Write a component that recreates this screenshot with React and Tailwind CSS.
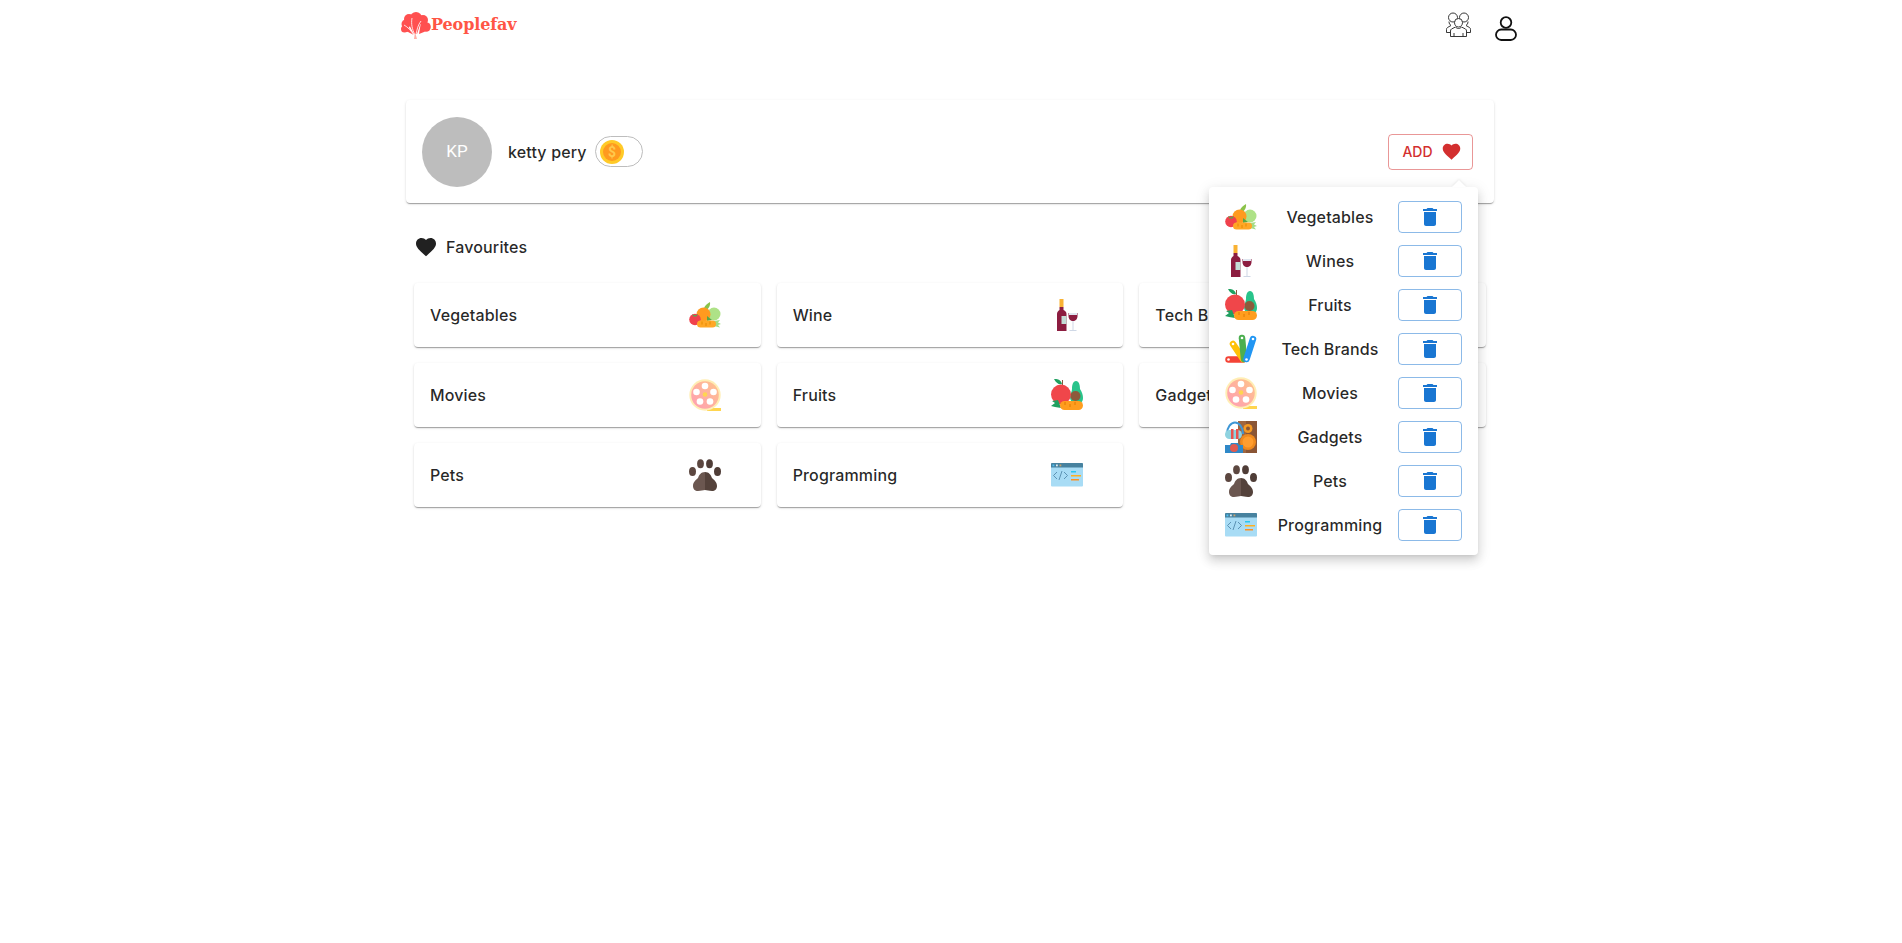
const FAVORITE = 'M12 21.35l-1.45-1.32C5.4 15.36 2 12.28 2 8.5 2 5.42 4.42 3 7.5 3c1.74 0 3.41.81 4.5 2.09C13.09 3.81 14.76 3 16.5 3 19.58 3 22 5.42 22 8.5c0 3.78-3.4 6.86-8.55 11.54L12 21.35z';
const DELETE = 'M6 19c0 1.1.9 2 2 2h8c1.1 0 2-.9 2-2V7H6v12zM19 4h-3.5l-1-1h-5l-1 1H5v2h14V4z';

function Heart({ className }) {
  return (
    <svg viewBox="0 0 24 24" className={className} fill="currentColor">
      <path d={FAVORITE} />
    </svg>
  );
}

function Vegetables() {
  return (
    <svg viewBox="0 0 32 32" className="w-8 h-8 shrink-0">
      <path d="M15 10C15 7 18 5 21 3 21.500 6 20 10 17 11z" fill="#8bc34a" />
      <circle cx="25" cy="15" r="6.500" fill="#aee287" />
      <circle cx="14.500" cy="15.500" r="7" fill="#ff9a1f" />
      <circle cx="6" cy="20.500" r="5.800" fill="#f0414c" />
      <path d="M3 15l3 1.500L9 15l-1.500 2.500h-3z" fill="#4caf50" />
      <path d="M25 22l6-1-2 2.500 3 1.500-3 1 2 2.500-6-1.500z" fill="#a5dc86" />
      <path d="M18 17l5 4-5 1z" fill="#5aa642" />
      <rect x="8" y="21.500" width="19" height="7" rx="3.500" fill="#ffa726" />
      <path d="M13 22.500v3M17 24v3M21 22.500v3" stroke="#e68a00" strokeWidth="1" />
    </svg>
  );
}

function Wine() {
  return (
    <svg viewBox="0 0 32 32" className="w-8 h-8 shrink-0">
      <rect x="8.500" y="0" width="4" height="8" fill="#f9b233" />
      <path d="M8.500 8h4v3c2 1 3 2 3 4v17H6V15c0-2 1-3 2.500-4z" fill="#8c1d40" />
      <rect x="10.500" y="17" width="5" height="8" fill="#c4dcd6" />
      <path d="M17.500 14h9v3c0 3-2 5-4.500 5s-4.500-2-4.500-5z" fill="#8c1d40" />
      <path d="M18 14h8v2h-8z" fill="#dfe6f0" />
      <path d="M21.500 22h1v9h3v1h-7v-1h3z" fill="#cfd8e6" />
    </svg>
  );
}

function Fruits() {
  return (
    <svg viewBox="0 0 32 32" className="w-8 h-8 shrink-0">
      <path d="M25 2c3 0 4 4 4 8 2 3 3 6 3 9 0 4-3 6-6 6-4 0-7-3-7-7 0-3 2-5 2-8 0-4 1-8 4-8z" fill="#29c48b" />
      <circle cx="24.500" cy="17" r="5" fill="#8d5a3c" />
      <path d="M4 0c3 0 6 1 7 5C8 6 5 4 3 0z" fill="#1fa060" />
      <path d="M11 1h1v5h-1z" fill="#8d5a3c" />
      <circle cx="10" cy="15.500" r="10" fill="#f0464a" />
      <path d="M0 27l4-3-3-2 6-1 3 8-6-1z" fill="#1fa060" />
      <rect x="9" y="22" width="23" height="9" rx="4.500" fill="#ff9d1e" />
      <path d="M14 23v3M19 25v3M24 23v3" stroke="#e07b00" strokeWidth="1" />
    </svg>
  );
}

function TechBrands() {
  return (
    <svg viewBox="0 0 32 32" className="w-8 h-8 shrink-0" strokeLinecap="round" strokeWidth="6.500">
      <path d="M3.500 26.500H18" stroke="#f44336" />
      <path d="M8 11l10 15" stroke="#ffc107" />
      <path d="M17 5l2 21" stroke="#4caf50" />
      <path d="M28 6l-6.500 20" stroke="#2196f3" />
      <g fill="#fff" stroke="none">
        <circle cx="3.500" cy="26.500" r="1.300" />
        <circle cx="8" cy="11" r="1.300" />
        <circle cx="17" cy="5" r="1.300" />
        <circle cx="28" cy="6" r="1.300" />
        <circle cx="21.500" cy="26.500" r="1.300" />
      </g>
    </svg>
  );
}

function Movies() {
  return (
    <svg viewBox="0 0 32 32" className="w-8 h-8 shrink-0">
      <defs>
        <linearGradient id="reel" x1="0" y1="1" x2="1" y2="0">
          <stop offset="0" stopColor="#ff9db5" />
          <stop offset="1" stopColor="#ffc48a" />
        </linearGradient>
      </defs>
      <rect x="18" y="29" width="14" height="3" fill="#ffd54f" />
      <circle cx="16" cy="16" r="15.700" fill="#ffeeb5" />
      <circle cx="16" cy="16" r="13.800" fill="url(#reel)" />
      <g fill="#fff">
        <circle cx="16" cy="7" r="3.300" />
        <circle cx="7.500" cy="13" r="3.300" />
        <circle cx="24.500" cy="13" r="3.300" />
        <circle cx="11" cy="22.500" r="3.300" />
        <circle cx="21" cy="22.500" r="3.300" />
      </g>
      <circle cx="16" cy="15.500" r="2.300" fill="#ffd54f" />
    </svg>
  );
}

function Gadgets() {
  return (
    <svg viewBox="0 0 32 32" className="w-8 h-8 shrink-0">
      <rect x="13" y="0" width="19" height="32" fill="#8a5535" />
      <rect x="13" y="0" width="8" height="32" fill="#a0663f" />
      <circle cx="23" cy="7.500" r="4.500" fill="#f59a23" />
      <circle cx="23" cy="7.500" r="2" fill="#8a5535" />
      <circle cx="23" cy="21" r="8" fill="#ef8a1d" />
      <circle cx="23" cy="21" r="5.500" fill="#ff9d2e" />
      <path d="M2 13C2 6 6 1.500 10 1.500S18 6 18 13" fill="none" stroke="#3f97d6" strokeWidth="2" />
      <rect x="0" y="9" width="17" height="9" rx="4.500" fill="#8fd3e0" />
      <rect x="6" y="8" width="2.500" height="10" fill="#e9534f" />
      <rect x="11" y="8" width="2.500" height="10" fill="#e9534f" />
      <path d="M6 22h7l1 2h4v8H0v-8h5z" fill="#2f88c8" />
      <circle cx="9" cy="27" r="4" fill="#e05a4f" />
    </svg>
  );
}

function Paw() {
  return (
    <svg viewBox="0 0 32 32" className="w-8 h-8 shrink-0">
      <ellipse cx="11.500" cy="4.700" rx="3.400" ry="4.500" fill="#5c4740" />
      <ellipse cx="20.500" cy="4.700" rx="3.400" ry="4.500" fill="#4f3d37" />
      <ellipse cx="3.500" cy="12.500" rx="3.500" ry="4.500" fill="#5c4740" />
      <ellipse cx="28.500" cy="12.500" rx="3.500" ry="4.500" fill="#4f3d37" />
      <path d="M16 13c-4 0-6 3-7 6-2 2-5 4-5 8 0 3 2 5 5 5 3 0 5-1 7-1z" fill="#6b5750" />
      <path d="M16 13c4 0 6 3 7 6 2 2 5 4 5 8 0 3-2 5-5 5-3 0-5-1-7-1z" fill="#54423b" />
    </svg>
  );
}

function Programming() {
  return (
    <svg viewBox="0 0 32 32" className="w-8 h-8 shrink-0">
      <rect x="0" y="4" width="32" height="23.500" rx="1" fill="#a8dcf5" />
      <path d="M0 5a1 1 0 011-1h30a1 1 0 011 1v3.500H0z" fill="#47829f" />
      <rect x="1.500" y="5.500" width="1.800" height="1.800" fill="#4fc3f7" />
      <rect x="5" y="5.500" width="1.800" height="1.800" fill="#e3edf2" />
      <rect x="8.500" y="5.500" width="1.800" height="1.800" fill="#c9a26b" />
      <path d="M6 13l-3.500 3.500L6 20M13 13l3.500 3.500L13 20M11 12l-3 9" fill="none" stroke="#5c93b4" strokeWidth="1" />
      <rect x="20" y="12" width="5" height="1.500" fill="#29c6f0" />
      <rect x="20" y="16" width="10" height="1.500" fill="#ffb020" />
      <rect x="20" y="20" width="8" height="1.500" fill="#ff9020" />
    </svg>
  );
}

const favourites = [
  { name: 'Vegetables', Icon: Vegetables },
  { name: 'Wine', Icon: Wine },
  { name: 'Tech Brands', Icon: TechBrands },
  { name: 'Movies', Icon: Movies },
  { name: 'Fruits', Icon: Fruits },
  { name: 'Gadgets', Icon: Gadgets },
  { name: 'Pets', Icon: Paw },
  { name: 'Programming', Icon: Programming },
];

const addList = [
  { name: 'Vegetables', Icon: Vegetables },
  { name: 'Wines', Icon: Wine },
  { name: 'Fruits', Icon: Fruits },
  { name: 'Tech Brands', Icon: TechBrands },
  { name: 'Movies', Icon: Movies },
  { name: 'Gadgets', Icon: Gadgets },
  { name: 'Pets', Icon: Paw },
  { name: 'Programming', Icon: Programming },
];

function Logo() {
  return (
    <div className="flex items-center pl-[1px]">
      <svg viewBox="0 0 30 27" className="w-[30px] h-[27px]">
        <g fill="#ff5050">
          <circle cx="8" cy="7" r="5" />
          <circle cx="15" cy="6" r="6" />
          <circle cx="22" cy="8" r="5" />
          <circle cx="5" cy="12" r="4.500" />
          <circle cx="3.500" cy="17" r="3.500" />
          <circle cx="25" cy="15" r="4.800" />
          <path d="M1 17l7-1 5 7-6-3-5-1z" />
          <path d="M5 7h16l-5 15h-3z" />
          <path d="M20 10l9 4-6 6-5 2z" />
        </g>
        <g fill="none" stroke="#fff" strokeWidth="0.800">
          <path d="M14 23C11 17 10 12 11 6" />
          <path d="M15 23C16 17 17 13 20 9" />
          <path d="M13 23C10 19 7 15 3 13" />
        </g>
        <path d="M14 20l2 7h-3z" fill="#ffb0a8" />
      </svg>
      <span className="font-['DejaVu_Serif'] font-bold text-[16px] leading-none text-[#ff5545] tracking-[-0.1px]">Peoplefav</span>
    </div>
  );
}

function GroupIcon() {
  return (
    <svg viewBox="0 0 25 25" className="w-[25px] h-[25px]" fill="none" stroke="#222" strokeWidth="0.900">
      <circle cx="7" cy="5.500" r="4.500" />
      <circle cx="18" cy="5.500" r="4.500" />
      <path d="M3 9.500C3 12 4 12.500 5 13.500L1.500 15.500C.8 16 .5 16.500 .5 17.500V20.500H4.500" />
      <path d="M22 9.500C22 12 21 12.500 20 13.500L23.500 15.500C24.200 16 24.500 16.500 24.500 17.500V20.500H20.500" />
      <path d="M8.500 10.500a4 4 0 118 0c0 2.500-1.500 4.500-4 4.500s-4-2-4-4.500z" fill="#fff" />
      <path d="M9.500 15L5.500 17C4.800 17.400 4.500 18 4.500 19V24.500H20.500V19C20.500 18 20.200 17.400 19.500 17L15.500 15C14 17 11 17 9.500 15z" fill="#fff" />
      <path d="M8 21v3.500M17 21v3.500" />
    </svg>
  );
}

function UserIcon() {
  return (
    <svg viewBox="0 0 22 25" className="w-[22px] h-[25px]" fill="none" stroke="#111" strokeWidth="1.800">
      <circle cx="11" cy="6.500" r="5.300" />
      <rect x="1" y="13.500" width="20" height="10.500" rx="5.200" />
    </svg>
  );
}

function AddPopover() {
  return (
    <div className="absolute left-[803px] top-[87px] w-[269px] rounded bg-white py-2 px-4 shadow-[0_3px_5px_-3px_rgba(0,0,0,0.16),0_6px_10px_1px_rgba(0,0,0,0.1),0_3px_14px_2px_rgba(0,0,0,0.08)]">
      <div className="absolute right-[12px] -top-[7px] w-0 h-0 border-x-[7px] border-b-[7px] border-x-transparent border-b-white drop-shadow-[0_-1px_1px_rgba(0,0,0,0.08)]" />
      {addList.map(({ name, Icon }) => (
        <div key={name} className="flex items-center h-11">
          <Icon />
          <span className="flex-1 pl-[5px] text-center text-base font-medium tracking-[0.15px] text-black/85">{name}</span>
          <button className="w-16 h-8 flex items-center justify-center rounded border border-[#1976d2]/50 text-[#1976d2]">
            <svg viewBox="0 0 24 24" className="w-6 h-6" fill="currentColor">
              <path d={DELETE} />
            </svg>
          </button>
        </div>
      ))}
    </div>
  );
}

export default function App() {
  return (
    <div className="min-h-[943px] bg-white font-['Inter',sans-serif] text-black/85 pl-[400px]">
      <div className="w-[1120px]">
        <header className="flex items-center justify-between h-[50px] pr-[3px]">
          <Logo />
          <div className="flex items-center gap-[24px] mt-[2px]">
            <div className="-mt-[4px]"><GroupIcon /></div>
            <div className="mt-[4px]"><UserIcon /></div>
          </div>
        </header>

        <div className="ml-[6px] w-[1088px] relative mt-[50px]">
          <div className="h-[103px] rounded bg-white px-4 flex items-center shadow-[0_2px_1px_-1px_rgba(0,0,0,0.2),0_1px_1px_0_rgba(0,0,0,0.14),0_1px_3px_0_rgba(0,0,0,0.12)]">
            <div className="w-[70px] h-[70px] rounded-full bg-[#bdbdbd] flex items-center justify-center text-white text-[17px] font-['Roboto']">KP</div>
            <span className="ml-4 text-base font-medium tracking-[0.15px]">ketty pery</span>
            <div className="ml-2 w-12 h-[31px] rounded-full border border-[#bdbdbd] flex items-center pl-[4px]">
              <svg viewBox="0 0 24 24" className="w-6 h-6">
                <circle cx="12" cy="12" r="12" fill="#ffca28" />
                <circle cx="12" cy="12" r="9" fill="#ff9a1f" />
                <text x="12" y="17" textAnchor="middle" fontSize="14" fontWeight="700" fontFamily="Roboto" fill="#ffc94d">$</text>
              </svg>
            </div>
            <button className="ml-auto mr-[5px] w-[85px] h-9 pl-[3px] rounded border border-[#d32f2f]/50 text-[#d32f2f] text-sm font-medium flex items-center justify-center gap-2">
              ADD
              <Heart className="w-[21px] h-[21px]" />
            </button>
          </div>
          <AddPopover />
        </div>

        <section className="ml-[14px] w-[1072px] mt-[29px]">
          <div className="flex items-center gap-2 h-[30px]">
            <Heart className="w-6 h-6 text-[#212121]" />
            <span className="text-base font-medium tracking-[0.15px]">Favourites</span>
          </div>
          <div className="grid grid-cols-3 gap-4 mt-[21px]">
            {favourites.map(({ name, Icon }) => (
              <div key={name} className="h-16 rounded bg-white pl-4 pr-10 flex items-center justify-between shadow-[0_2px_1px_-1px_rgba(0,0,0,0.2),0_1px_1px_0_rgba(0,0,0,0.14),0_1px_3px_0_rgba(0,0,0,0.12)]">
                <span className="text-base font-medium tracking-[0.15px]">{name}</span>
                <Icon />
              </div>
            ))}
          </div>
        </section>
      </div>
    </div>
  );
}
